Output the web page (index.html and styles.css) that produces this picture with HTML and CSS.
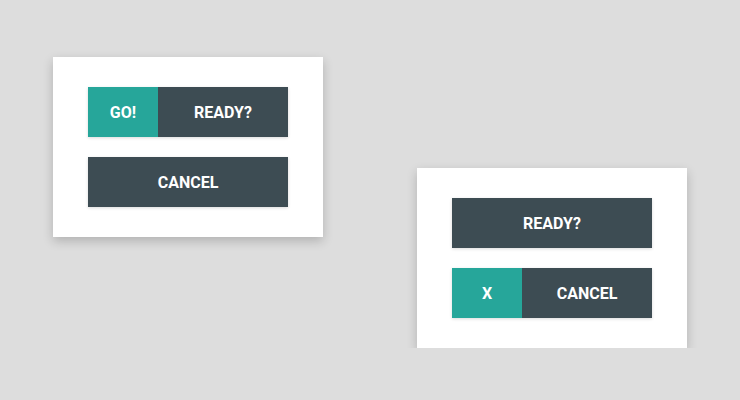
FILE: index.html
```html
<!DOCTYPE html>
<html lang="en">

<head>
    <title>Buttons</title>
    <meta charset="UTF-8" />
    <meta name="viewport" content="width=device-width, initial-scale=1.0" />
    <link rel="stylesheet" href="styles.css">
</head>

<body>
    <main class="stage">
        <section class="card">
            <div class="btn split">
                <span class="part accent">Go!</span>
                <span class="part main">Ready?</span>
            </div>
            <div class="btn">
                <span class="part main">Cancel</span>
            </div>
        </section>
        <section class="card lower">
            <div class="btn">
                <span class="part main">Ready?</span>
            </div>
            <div class="btn split">
                <span class="part accent">X</span>
                <span class="part main">Cancel</span>
            </div>
        </section>
    </main>
</body>

</html>
```

FILE: styles.css
```css
body {
    margin: 0;
    background-color: #dddddd;
    font-family: Roboto, 'Liberation Sans', sans-serif;
}

.stage {
    display: flex;
    align-items: flex-start;
    gap: 94px;
    padding: 57px 0 0 53px;
}

.card {
    width: 200px;
    padding: 30px 35px;
    background-color: #fff;
    display: flex;
    flex-direction: column;
    gap: 20px;
    box-shadow: 0 4px 10px rgba(0, 0, 0, 0.2);
}

.lower {
    margin-top: 111px;
}

.btn {
    display: flex;
    height: 50px;
    box-shadow: 0 1px 3px rgba(0, 0, 0, 0.15);
}

.part {
    display: flex;
    align-items: center;
    justify-content: center;
    color: #fff;
    font-size: 16px;
    font-weight: 700;
    text-transform: uppercase;
}

.main {
    flex: 1;
    background-color: #3d4c53;
}

.accent {
    width: 70px;
    background-color: #26a69a;
}
```
